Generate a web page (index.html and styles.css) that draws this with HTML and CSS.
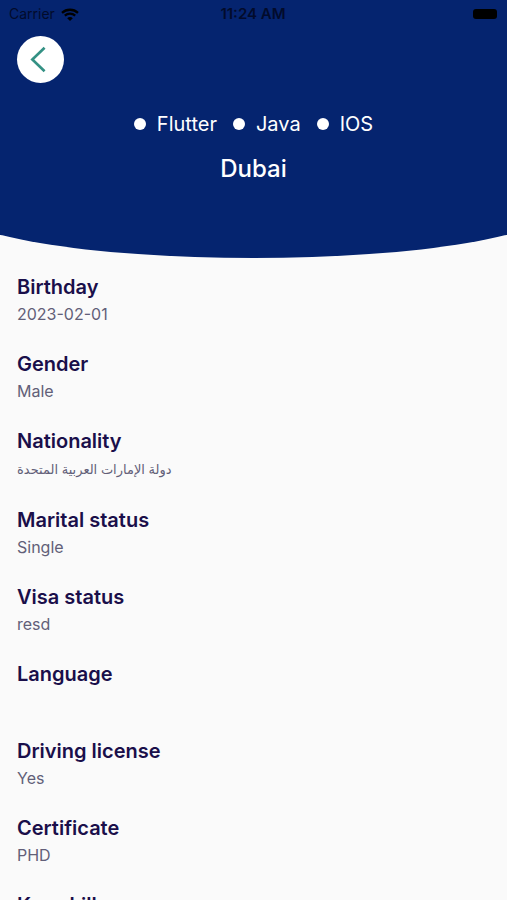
FILE: index.html
```html
<!DOCTYPE html>
<html lang="en">
<head>
<meta charset="utf-8">
<meta name="viewport" content="width=device-width, initial-scale=1">
<title>Profile</title>
<link rel="stylesheet" href="styles.css">
</head>
<body>
<header class="hero">
  <div class="status">
    <span class="carrier">Carrier
      <svg class="wifi" viewBox="0 0 18 13" aria-hidden="true"><path d="M1 4.8C5.500.7 12.500.7 17 4.800M3.800 7.600c3-2.600 7.400-2.600 10.400 0" fill="none" stroke="currentColor" stroke-width="2.300"/><path d="M6.200 10.200c1.600-1.500 4-1.500 5.600 0L9 13z" fill="currentColor"/></svg>
    </span>
    <span class="time">11:24 AM</span>
    <span class="battery"></span>
  </div>
  <button class="back" type="button" aria-label="Back">
    <svg viewBox="0 0 46 46" aria-hidden="true"><path d="M27 11.500 15 23 27 34.500" fill="none" stroke="currentColor" stroke-width="2.600"/></svg>
  </button>
  <ul class="skills">
    <li>Flutter</li>
    <li>Java</li>
    <li>IOS</li>
  </ul>
  <h1 class="city">Dubai</h1>
</header>
<svg class="curve" viewBox="0 0 507 24" preserveAspectRatio="none" aria-hidden="true"><ellipse cx="253.500" cy="-28" rx="302" ry="51"/></svg>
<dl class="details">
  <div class="item"><dt>Birthday</dt><dd>2023-02-01</dd></div>
  <div class="item"><dt>Gender</dt><dd>Male</dd></div>
  <div class="item"><dt>Nationality</dt><dd class="arabic" lang="ar"><bdi>دولة الإمارات العربية المتحدة</bdi></dd></div>
  <div class="item"><dt>Marital status</dt><dd>Single</dd></div>
  <div class="item"><dt>Visa status</dt><dd>resd</dd></div>
  <div class="item"><dt>Language</dt><dd></dd></div>
  <div class="item"><dt>Driving license</dt><dd>Yes</dd></div>
  <div class="item"><dt>Certificate</dt><dd>PHD</dd></div>
  <div class="item"><dt>Key skills</dt><dd></dd></div>
</dl>
</body>
</html>
```
FILE: styles.css
```css
* {
  box-sizing: border-box;
}

html {
  scrollbar-width: none;
}

body {
  margin: 0;
  background: #fafafa;
  color: #1a0f4a;
  font-family: Inter, "Noto Sans", "DejaVu Sans", sans-serif;
}

.hero {
  padding-bottom: 51px;
  background: #05246f;
  color: #fff;
}

.status {
  display: grid;
  grid-template-columns: 1fr auto 1fr;
  align-items: center;
  height: 28px;
  padding: 0 10px 0 9px;
  color: #020b2b;
  font-size: 14px;
  line-height: 28px;
}

.carrier {
  display: flex;
  align-items: center;
  gap: 6px;
}

.wifi {
  width: 18px;
  height: 13px;
  color: #000;
}

.time {
  font-size: 15px;
  font-weight: 600;
}

.battery {
  justify-self: end;
  width: 24px;
  height: 10px;
  border-radius: 3px;
  background: #000;
}

.back {
  display: block;
  width: 47px;
  height: 47px;
  margin: 8px 0 0 17px;
  padding: 0;
  border: 0;
  border-radius: 50%;
  background: #fff;
  color: #349184;
}

.back svg {
  display: block;
  width: 100%;
}

.skills {
  display: flex;
  justify-content: center;
  gap: 16px;
  margin: 26px 0 0;
  padding: 0;
  list-style: none;
  font-size: 20px;
  line-height: 30px;
}

.skills li {
  display: flex;
  align-items: center;
  gap: 11px;
}

.skills li::before {
  content: "";
  width: 12px;
  height: 12px;
  border-radius: 50%;
  background: #fff;
}

.city {
  margin: 15px 0 0;
  font-size: 24px;
  font-weight: 500;
  line-height: 30px;
  text-align: center;
}

.curve {
  display: block;
  width: 100%;
  height: 24px;
  fill: #05246f;
}

.details {
  margin: 0;
  padding: 14px 17px;
}

.item {
  margin-bottom: 23px;
}

dt {
  font-size: 20px;
  font-weight: 600;
  line-height: 28px;
}

dd {
  min-height: 26px;
  margin: 0;
  color: #625f78;
  font-size: 16px;
  line-height: 26px;
}

.arabic {
  font-size: 13px;
  line-height: 28px;
}
```
